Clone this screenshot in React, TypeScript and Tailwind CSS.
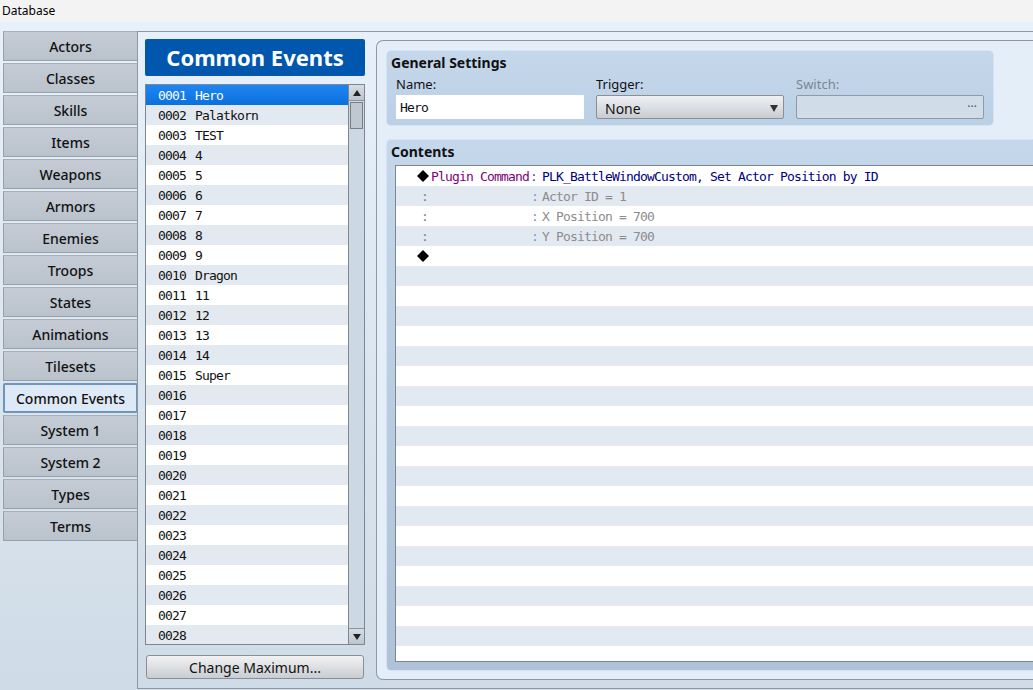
import React from 'react';

const UI = { fontFamily: '"Noto Sans", "Open Sans", sans-serif' };
const MONO = { fontFamily: '"DejaVu Sans Mono", "Liberation Mono", monospace' };

const tabs = [
  'Actors', 'Classes', 'Skills', 'Items', 'Weapons', 'Armors', 'Enemies', 'Troops',
  'States', 'Animations', 'Tilesets', 'Common Events', 'System 1', 'System 2', 'Types', 'Terms',
];

const names: Record<number, string> = {
  1: 'Hero', 2: 'Palatkorn', 3: 'TEST', 4: '4', 5: '5', 6: '6', 7: '7', 8: '8', 9: '9',
  10: 'Dragon', 11: '11', 12: '12', 13: '13', 14: '14', 15: 'Super',
};

function SideTab({ label, active }: { label: string; active?: boolean }) {
  return (
    <div
      className={
        active
          ? 'h-[30px] w-[135px] flex items-center justify-center text-[14px] font-medium text-[#111] bg-[#dde9f6] border-2 border-[#6f95bd] rounded-[2px]'
          : 'h-[30px] w-[135px] flex items-center justify-center text-[14px] font-medium text-[#111] bg-gradient-to-b from-[#c5ccd5] to-[#bac2cc] border border-[#97a0aa] border-t-[#a8b0ba]'
      }
    >
      {label}
    </div>
  );
}

function EventList() {
  const rows = Array.from({ length: 28 }, (_, i) => i + 1);
  return (
    <div className="h-[561px] border border-[#7e868e] flex bg-white">
      <div className="flex-1 overflow-hidden" style={MONO}>
        {rows.map((n, i) => (
          <div
            key={n}
            className={
              i === 0
                ? 'h-[20px] flex items-center pt-[2px] pl-[12px] text-[13px] tracking-[-0.83px] text-white bg-gradient-to-b from-[#1d86f2] to-[#0a70dc]'
                : i % 2 === 1
                ? 'h-[20px] flex items-center pt-[2px] pl-[12px] text-[13px] tracking-[-0.83px] text-[#111] bg-[#e3e9f0]'
                : 'h-[20px] flex items-center pt-[2px] pl-[12px] text-[13px] tracking-[-0.83px] text-[#111] bg-white'
            }
          >
            <span>{String(n).padStart(4, '0')}</span>
            <span className="ml-[9px]">{names[n] ?? ''}</span>
          </div>
        ))}
      </div>
      <div className="w-[16px] border-l border-[#7e868e] bg-[#ccd8e3] flex flex-col">
        <div className="h-[16px] bg-gradient-to-b from-[#d6dde4] to-[#bcc5ce] border-b border-[#8c959e] flex items-center justify-center">
          <svg width="8" height="6" viewBox="0 0 8 6"><path d="M4 0 L8 6 L0 6 Z" fill="#222" /></svg>
        </div>
        <div className="h-[27px] mx-[1px] mt-[1px] bg-[#bfc7d0] border border-[#767f88]" />
        <div className="flex-1" />
        <div className="h-[16px] bg-gradient-to-b from-[#d6dde4] to-[#bcc5ce] border-t border-[#8c959e] flex items-center justify-center">
          <svg width="8" height="6" viewBox="0 0 8 6"><path d="M0 0 L8 0 L4 6 Z" fill="#222" /></svg>
        </div>
      </div>
    </div>
  );
}

function Diamond() {
  return (
    <svg width="12" height="12" viewBox="0 0 12 12" className="shrink-0">
      <path d="M6 0 L12 6 L6 12 L0 6 Z" fill="#000" />
    </svg>
  );
}

function ContentsList() {
  const rows = Array.from({ length: 25 }, (_, i) => i);
  const base = 'h-[20px] flex items-center text-[13px] tracking-[-0.83px]';
  return (
    <div className="h-[497px] border border-[#7e868e] border-r-0 bg-white overflow-hidden" style={MONO}>
      {rows.map((i) => (
        <div key={i} className={i % 2 === 0 ? `${base} bg-white` : `${base} bg-[#e3e9f0]`}>
          {i === 0 && (
            <>
              <span className="ml-[21px]"><Diamond /></span>
              <span className="ml-[2px] w-[99px] pt-[2px] text-[#800080]">Plugin Command</span>
              <span className="w-[12px] pt-[2px] text-[#6040c0]">:</span>
              <span className="pt-[2px] text-[#000080]">PLK_BattleWindowCustom, Set Actor Position by ID</span>
            </>
          )}
          {i >= 1 && i <= 3 && (
            <>
              <span className="ml-[25px] w-[110px] pt-[2px] text-[#808080]">:</span>
              <span className="w-[11px] pt-[2px] text-[#8a8ad0]">:</span>
              <span className="pt-[2px] text-[#8c8c8c]">
                {i === 1 ? 'Actor ID = 1' : i === 2 ? 'X Position = 700' : 'Y Position = 700'}
              </span>
            </>
          )}
          {i === 4 && (
            <span className="ml-[21px]"><Diamond /></span>
          )}
        </div>
      ))}
    </div>
  );
}

export default function App() {
  return (
    <div className="w-[1033px] h-[690px] overflow-hidden flex flex-col text-[#111]" style={UI}>
      <div className="h-[22px] bg-[#f3f3f3] flex items-center pl-[2px] text-[12px] text-black">Database</div>
      <div className="flex-1 flex pt-[9px] bg-gradient-to-b from-[#e8f1fb] to-[#cfdbe6]">
        <div className="w-[137px] shrink-0 pl-[3px] flex flex-col gap-[2px]">
          {tabs.map((t) => (
            <SideTab key={t} label={t} active={t === 'Common Events'} />
          ))}
        </div>
        <div className="flex-1 mb-[1px] border-l border-t border-b border-[#8e98a2] flex pl-[7px] pt-[7px] overflow-hidden">
          <div className="w-[220px] shrink-0 flex flex-col">
            <div className="h-[37px] bg-[#0057ad] rounded-[2px] flex items-center justify-center text-white text-[22px] font-bold">
              Common Events
            </div>
            <div className="mt-[8px]">
              <EventList />
            </div>
            <div className="mt-[10px] mx-[1px] h-[24px] rounded-[3px] border border-[#8a8f95] bg-gradient-to-b from-[#f2f2f2] to-[#c9cdd2] flex items-center justify-center text-[14px]">
              Change Maximum...
            </div>
          </div>
          <div className="ml-[11px] mt-[1px] w-[720px] shrink-0 h-[640px] rounded-l-[7px] border border-r-0 border-[#8e98a2] bg-[#e4eef9] pl-[9px] pt-[9px] pb-[8px] flex flex-col">
            <div className="w-[608px] h-[77px] rounded-[5px] border border-[#d6e3f0] bg-gradient-to-b from-[#c4d7eb] to-[#bcd0e5] px-[4px] pt-[3px]">
              <div className="text-[14px] font-bold leading-[18px]">General Settings</div>
              <div className="flex gap-[12px] pl-[5px] mt-[4px]">
                <div className="w-[188px]">
                  <div className="text-[13px] leading-[17px]">Name:</div>
                  <div className="mt-[2px] h-[24px] bg-white flex items-center pt-[2px] pl-[4px] text-[13px] tracking-[-0.83px]" style={MONO}>Hero</div>
                </div>
                <div className="w-[188px]">
                  <div className="text-[13px] leading-[17px]">Trigger:</div>
                  <div className="mt-[2px] h-[24px] rounded-[2px] border border-[#8a8f95] bg-gradient-to-b from-[#f0f1f3] to-[#c8ccd2] flex items-center pt-[2px] pl-[8px] pr-[5px] text-[14px]">
                    <span className="flex-1">None</span>
                    <svg width="8" height="7" viewBox="0 0 8 7"><path d="M0 0 L8 0 L4 7 Z" fill="#333" /></svg>
                  </div>
                </div>
                <div className="w-[188px]">
                  <div className="text-[13px] leading-[17px] text-[#7a8590]">Switch:</div>
                  <div className="mt-[2px] h-[24px] rounded-[2px] border border-[#8e9aa8] bg-[#d0dce8] flex items-center justify-end pr-[6px] text-[12px] text-[#555]">
                    ···
                  </div>
                </div>
              </div>
            </div>
            <div className="mt-[13px] flex-1 rounded-l-[5px] border border-r-0 border-[#d6e3f0] bg-gradient-to-b from-[#c4d7eb] to-[#aec3d9] pl-[8px] pt-[3px] pb-[8px] flex flex-col">
              <div className="text-[14px] font-bold leading-[18px] -ml-[4px]">Contents</div>
              <div className="mt-[4px]">
                <ContentsList />
              </div>
            </div>
          </div>
        </div>
      </div>
    </div>
  );
}
